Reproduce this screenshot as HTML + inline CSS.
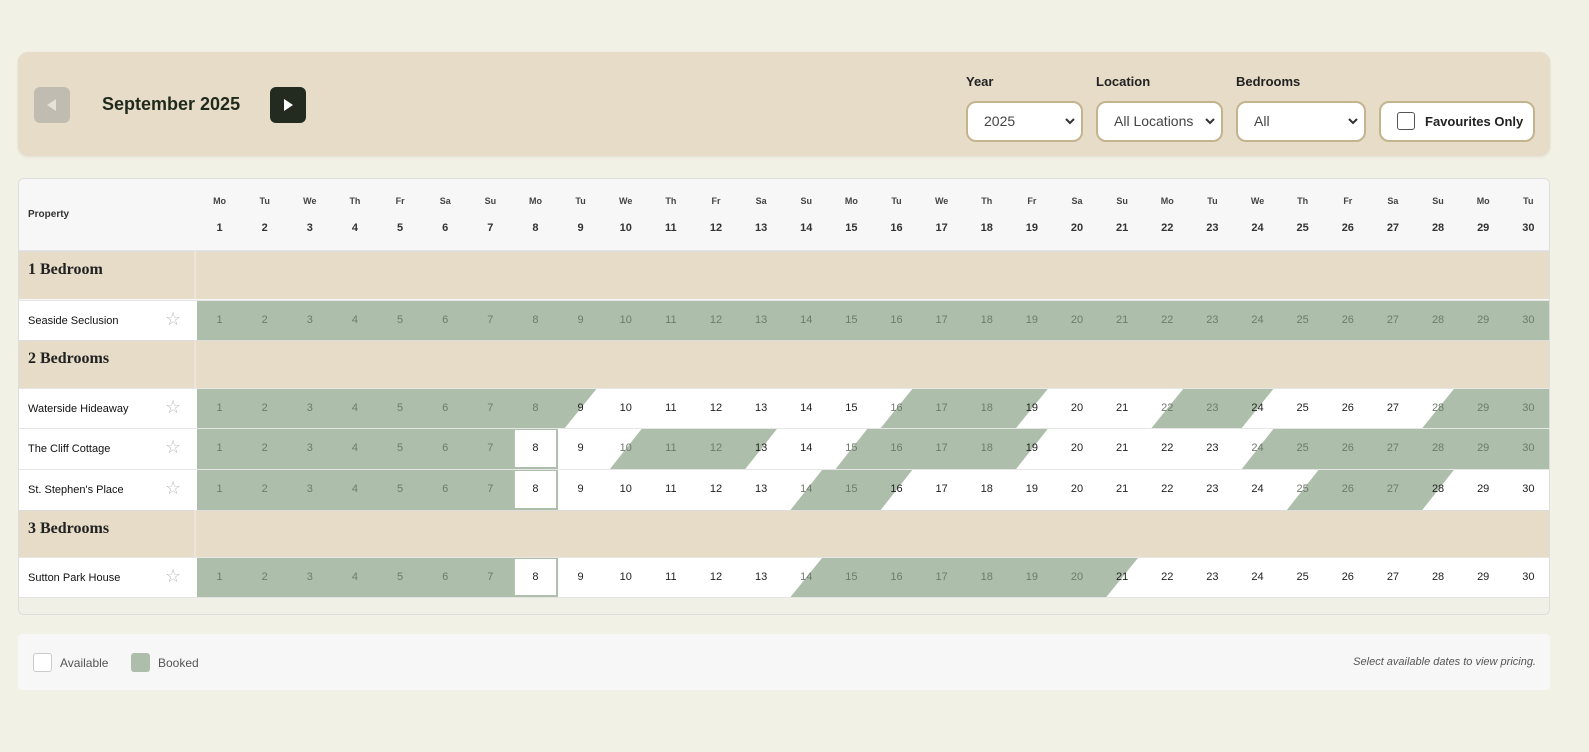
<!DOCTYPE html>
<html><head><meta charset="utf-8"><style>
*{box-sizing:border-box;margin:0;padding:0}
body{width:1589px;height:752px;background:#f2f1e6;font-family:"Liberation Sans",sans-serif;position:relative;overflow:hidden;color:#222}
.abs{position:absolute}
.panel{left:18px;top:52px;width:1532px;height:104px;background:#e6dcc8;border-radius:10px;box-shadow:0 1px 3px rgba(0,0,0,.08)}
.btn{width:36px;height:36px;border-radius:6px;top:87px}
.lbl{font-size:13px;font-weight:bold;top:74px;color:#222}
.sel{top:101px;height:41px;background:#fff;border:2px solid #c4b48e;border-radius:10px;font-size:14px;color:#444;padding-left:16px;line-height:37px}
.sel .chev{position:absolute;right:6px;top:14px}
.tbl{left:18px;top:178px;width:1532px;height:437px;background:#f7f7f7;border:1px solid #ddd;border-radius:6px;overflow:hidden}
.num{position:absolute;text-align:center;font-size:11px}
.wd{font-size:9px;font-weight:bold;color:#444}
.dn{font-size:11px;font-weight:bold;color:#333}
.grp{background:#e6dcc8}
.gname{font-family:"Liberation Serif",serif;font-weight:bold;font-size:16px;color:#222}
.pname{font-size:11px;color:#111}
</style></head><body>
<div class="abs panel"></div>
<div class="abs btn" style="left:34px;background:#c1bcb1"><svg width="36" height="36"><polygon points="13,18 22,12 22,24" fill="#e6e2da"/></svg></div>
<div class="abs" style="left:102px;top:94px;font-size:18px;font-weight:bold;color:#1f2a1c">September 2025</div>
<div class="abs btn" style="left:270px;background:#232a20"><svg width="36" height="36"><polygon points="14,12 23,18 14,24" fill="#fff"/></svg></div>

<div class="abs lbl" style="left:966px">Year</div>
<div class="abs lbl" style="left:1096px">Location</div>
<div class="abs lbl" style="left:1236px">Bedrooms</div>
<div class="abs sel" style="left:966px;width:117px">2025<svg class="chev" width="10" height="8"><polyline points="1,2 5,6 9,2" fill="none" stroke="#333" stroke-width="2"/></svg></div>
<div class="abs sel" style="left:1096px;width:127px">All Locations<svg class="chev" width="10" height="8"><polyline points="1,2 5,6 9,2" fill="none" stroke="#333" stroke-width="2"/></svg></div>
<div class="abs sel" style="left:1236px;width:130px">All<svg class="chev" width="10" height="8"><polyline points="1,2 5,6 9,2" fill="none" stroke="#333" stroke-width="2"/></svg></div>
<div class="abs sel" style="left:1379px;width:156px;padding-left:16px;font-weight:bold;font-size:13px;color:#222"><span style="display:inline-block;width:18px;height:18px;border:1.5px solid #555;border-radius:3px;vertical-align:middle;margin-right:10px;margin-top:-3px"></span>Favourites Only</div>

<div class="abs tbl" id="t"></div>

<div class="abs" style="left:18px;top:634px;width:1532px;height:56px;background:#f7f7f7;border-radius:4px"></div>
<div class="abs" style="left:33px;top:653px;width:19px;height:19px;background:#fff;border:1px solid #ccc;border-radius:3px"></div>
<div class="abs" style="left:60px;top:656px;font-size:12px;color:#555">Available</div>
<div class="abs" style="left:131px;top:653px;width:19px;height:19px;background:#adbfab;border-radius:3px"></div>
<div class="abs" style="left:158px;top:656px;font-size:12px;color:#555">Booked</div>
<div class="abs" style="right:53px;top:656px;font-size:11px;font-style:italic;color:#555">Select available dates to view pricing.</div>

<script>
const t=document.getElementById('t');
const X0=175,W=45.13,N=30;
const wd=['Mo','Tu','We','Th','Fr','Sa','Su'];
let h='';
h+=`<div class="abs" style="left:0;top:0;width:1532px;height:72px;background:#f7f7f7;border-bottom:1px solid #e3e3e3"></div>`;
h+=`<div class="abs" style="left:9px;top:30px;font-size:10px;font-weight:bold;color:#333">Property</div>`;
for(let i=0;i<N;i++){let x=X0+i*W+3;
h+=`<div class="num wd" style="left:${x}px;width:${W}px;top:17px">${wd[i%7]}</div>`;
h+=`<div class="num dn" style="left:${x}px;width:${W}px;top:43px">${i+1}</div>`;}
const rows=[
['g','1 Bedroom',72,48],
['p','Seaside Seclusion',121,40,[[0,31]],false],
['g','2 Bedrooms',161,48],
['p','Waterside Hideaway',209,40,[[0,9],[16,19],[22,24],[28,31]],false],
['p','The Cliff Cottage',249,41,[[0,8],[10,13],[15,19],[24,31]],true],
['p',"St. Stephen's Place",290,41,[[0,8],[14,16],[25,28]],true],
['g','3 Bedrooms',331,47],
['p','Sutton Park House',378,40,[[0,8],[14,21]],true]];
const L=d=>X0+3+(d-1)*W;
for(const r of rows){
 if(r[0]=='g'){
  h+=`<div class="abs grp" style="left:0;top:${r[2]}px;width:1532px;height:${r[3]}px;border-top:1px solid #ddd"></div>`;
  h+=`<div class="abs" style="left:${X0}px;top:${r[2]}px;width:2px;height:${r[3]}px;background:#ede6d8"></div>`;
  h+=`<div class="abs gname" style="left:9px;top:${r[2]+10}px">${r[1]}</div>`;
 } else {
  const y=r[2],H=r[3];
  h+=`<div class="abs" style="left:0;top:${y}px;width:1532px;height:${H}px;background:#fff;border-top:1px solid #e6e6e6"></div>`;
  let svg=`<svg class="abs" style="left:0;top:${y+1}px" width="1532" height="${H-1}">`;
  const booked=new Set();
  for(const [s,e] of r[4]){
   const x1=s<=1?X0+3:L(s)+0.15*W, x1t=s<=1?X0+3:L(s)+0.85*W;
   const x2=e>30?1532:L(e)+0.15*W, x2t=e>30?1532:L(e)+0.85*W;
   svg+=`<polygon points="${x1},${H-1} ${x1t},0 ${x2t},0 ${x2},${H-1}" fill="#adbfab"/>`;
   for(let d=Math.max(1,s);d<Math.min(e,31);d++)booked.add(d);
  }
  if(r[5]) svg+=`<rect x="${L(8)+1}" y="0" width="${W-2}" height="${H-2}" fill="#fff" stroke="#adbfab" stroke-width="2"/>`;
  svg+='</svg>';
  h+=svg;
  h+=`<div class="abs pname" style="left:9px;top:${y+15}px">${r[1]}</div>`;
  h+=`<div class="abs" style="left:146px;top:${y+9}px;font-size:18px;color:#bbb">☆</div>`;
  for(let i=0;i<N;i++){const d=i+1;const bk=booked.has(d)&&!(r[5]&&d==8);
   h+=`<div class="num" style="left:${L(d)}px;width:${W}px;top:${y+14}px;color:${bk?'#6f7a6c':'#222'}">${d}</div>`;}
 }
}
h+=`<div class="abs" style="left:0;top:418px;width:1532px;height:1px;background:#e3e3e3"></div>`;
h+=`<div class="abs" style="left:0;top:419px;width:1532px;height:18px;background:#f0f0e6"></div>`;
t.innerHTML=h;
</script>
</body></html>
